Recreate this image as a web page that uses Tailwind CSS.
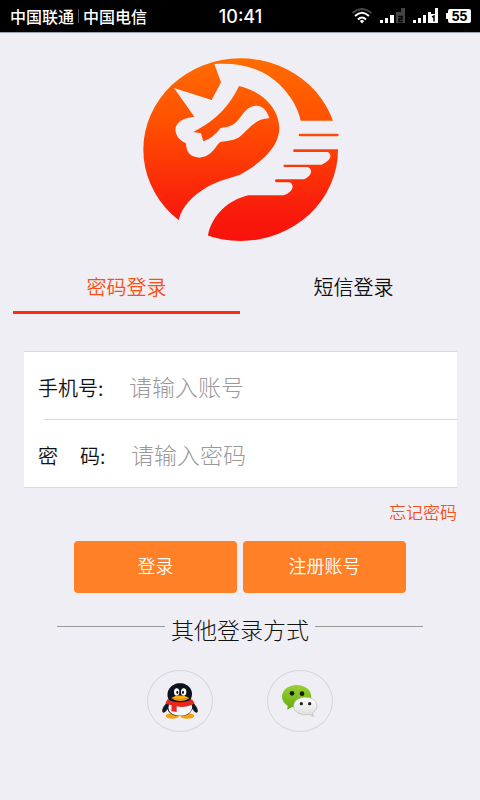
<!DOCTYPE html>
<html lang="zh-CN">
<head>
    <meta charset="UTF-8">
    <meta name="viewport" content="width=device-width, initial-scale=1.0">
    <title>登录</title>
    <script src="https://cdn.jsdelivr.net/npm/@tailwindcss/browser@4"></script>
</head>
<body class="min-h-screen bg-[#efeef4] font-['Noto_Sans_CJK_SC',sans-serif] font-[350] text-[#111]">
    <!-- Status bar -->
    <header class="grid h-[33px] grid-cols-[1fr_auto_1fr] items-center border-b border-gray-400 bg-black pr-[9px] pl-[10px] text-white">
        <div class="flex items-center text-base leading-6 font-medium">
            <span>中国联通</span>
            <span class="mx-1 h-[14px] w-px bg-gray-600"></span>
            <span>中国电信</span>
        </div>
        <time class="pt-px font-[Inter,sans-serif] text-lg leading-6 font-medium">10:41</time>
        <div class="flex items-center justify-end gap-2">
            <svg class="h-4 w-5" viewBox="0 0 20 16" fill="none" stroke-width="2">
                <path d="M0.500 5Q10 -3 19.500 5" stroke="#444"/>
                <path d="M3 8Q10 1.500 17 8M6 11.500Q10 7.500 14 11.500" stroke="#fff"/>
                <path d="M7.800 13Q10 11 12.200 13L10 15.500Z" fill="#fff"/>
            </svg>
            <svg class="h-4 w-[25px]" viewBox="0 0 25 16" fill="#fff">
                <path d="M0 12h3v3H0zM5 10h3v5H5zM10 7h4v8h-4z"/>
                <path d="M16 4h5V0h4v15h-9z" fill="#444"/>
                <path d="M18 8.500h4v2.500h-3v2.500h4" fill="none" stroke="#000" stroke-width="1.500"/>
            </svg>
            <svg class="h-4 w-[25px]" viewBox="0 0 25 16" fill="#fff">
                <path d="M0 12h3v3H0zM5 10h3v5H5zM10 7h3v8h-3zM15 4h3v11h-3zM22 0h3v15h-7V6h4z"/>
                <path d="M19 9l2-1v5.500" fill="none" stroke="#000" stroke-width="1.500"/>
            </svg>
            <div class="flex items-center">
                <span class="h-[6px] w-[2px] bg-white"></span>
                <span class="h-[14px] w-[23px] rounded-[2px] bg-white text-center font-['Liberation_Sans',sans-serif] text-sm leading-[15px] font-bold text-black">55</span>
            </div>
        </div>
    </header>

    <main>
        <!-- Logo -->
        <svg class="mx-auto mt-[17px] h-[200px] w-[210px]" viewBox="0 0 630 600" role="img" aria-label="Logo">
            <defs>
                <linearGradient id="logo-fill" x1="0" y1="0" x2="0" y2="1">
                    <stop offset="0" stop-color="#ff6c00"/>
                    <stop offset="0.35" stop-color="#ff5000"/>
                    <stop offset="0.85" stop-color="#f91a0d"/>
                    <stop offset="1" stop-color="#f8120c"/>
                </linearGradient>
            </defs>
            <ellipse cx="317" cy="299" rx="292" ry="274" fill="url(#logo-fill)"/>
            <path fill="#efeef4" d="M238 42C325 36 390 60 435 105C473 143 490 180 497 212H630V298H479C473 298 473 306 479 306H578C592 314 590 330 560 344H449C444 344 444 351 449 351H518C534 358 532 376 507 388H424C419 388 419 397 424 397H464C480 404 474 428 445 436H340C282 450 232 492 219 556V620H100L132 508C140 470 175 436 215 412C250 392 285 384 315 374C365 346 431 300 433 235C432 170 375 122 312 108C285 165 245 210 175 246L198 250L205 274C225 267 242 253 257 234C300 230 305 215 325 190C350 157 390 158 403 205C358 206 340 240 318 257C300 273 277 271 256 276C242 286 232 320 193 323C164 320 154 308 153 280C125 268 118 245 123 229C133 207 155 204 178 200L117 114L230 150L258 97Z"/>
            <path d="M495 255H607" stroke="#fc4b05" stroke-width="8" stroke-linecap="round"/>
        </svg>

        <!-- Tabs -->
        <div class="mx-[13px] mt-4 grid grid-cols-2" role="tablist">
            <button type="button" role="tab" aria-selected="true" class="h-12 border-b-3 border-[#fa2d0c] pb-1 text-xl text-[#fb4f14]">密码登录</button>
            <button type="button" role="tab" aria-selected="false" class="h-12 border-b-3 border-transparent pb-1 text-xl">短信登录</button>
        </div>

        <form class="mt-[37px]">
            <div class="mr-[23px] ml-6 border-y border-[#d9d9de] bg-white">
                <div class="flex h-[67px] items-center pl-[14px]">
                    <label for="phone" class="w-[91px] pt-1 text-xl">手机号:</label>
                    <input id="phone" type="text" placeholder="请输入账号" class="min-w-0 flex-1 text-[23px] leading-8 font-light outline-none placeholder:text-[#999]">
                </div>
                <div class="ml-5 border-t border-[#d9d9de]"></div>
                <div class="flex h-[67px] items-center pl-[14px]">
                    <label for="password" class="flex w-[93px] gap-[22px] pt-1 text-xl"><span>密</span><span>码:</span></label>
                    <input id="password" type="password" placeholder="请输入密码" class="min-w-0 flex-1 text-[23px] leading-8 font-light outline-none placeholder:text-[#999]">
                </div>
            </div>
            <div class="mt-3 mr-[23px] text-right text-[17px] leading-6">
                <a href="#" class="text-[#f4511e]">忘记密码</a>
            </div>
            <div class="mx-[74px] mt-[17px] grid grid-cols-2 gap-[6px]">
                <button type="submit" class="h-[52px] rounded bg-[#ff8026] pb-[5px] text-lg text-white">登录</button>
                <button type="button" class="h-[52px] rounded bg-[#ff8026] pb-[5px] text-lg text-white">注册账号</button>
            </div>
        </form>

        <!-- Other sign-in methods -->
        <div class="mx-[57px] mt-5 flex items-start gap-[6px]">
            <span class="mt-[13px] h-px flex-1 bg-[#999]"></span>
            <h2 class="text-[23px] leading-8 font-light">其他登录方式</h2>
            <span class="mt-[13px] h-px flex-1 bg-[#999]"></span>
        </div>
        <div class="mt-[25px] flex justify-center gap-[54px]">
            <a href="#" aria-label="QQ" class="flex h-[62px] w-[66px] items-center justify-center rounded-[50%] border border-[#d5d5da]">
                <svg class="h-9 w-9" viewBox="0 0 108 108">
                    <ellipse cx="31" cy="99" rx="20" ry="8" fill="#f5a211"/>
                    <ellipse cx="76" cy="99" rx="21" ry="8" fill="#f5a211"/>
                    <path d="M23 53C8 62-3 79 2 88C7 92 15 82 19 75M85 53C101 63 111 80 106 88C101 92 93 82 89 75" fill="#111820"/>
                    <path d="M20 50C9 25 27 1 54 1S99 25 86 50C99 76 89 99 54 99S8 76 20 50Z" fill="#0c1220"/>
                    <path d="M22 62H88C97 81 80 98 56 98C27 98 13 82 22 62Z" fill="#f4f7fa"/>
                    <ellipse cx="44" cy="27" rx="8" ry="11" fill="#fff"/>
                    <ellipse cx="65" cy="27" rx="8" ry="11" fill="#fff"/>
                    <ellipse cx="46" cy="28" rx="3" ry="5" fill="#111"/>
                    <ellipse cx="63" cy="28" rx="3" ry="5" fill="#111"/>
                    <path d="M16 49C39 61 69 61 90 49L98 61C81 72 58 74 44 70V87L28 85L29 67L10 62Z" fill="#e8281e"/>
                    <path d="M28 45C42 35 66 35 82 45C69 57 41 57 28 45Z" fill="#f9ae16"/>
                    <path d="M31 46Q55 54 78 46" fill="none" stroke="#c46d08" stroke-width="2"/>
                </svg>
            </a>
            <a href="#" aria-label="微信" class="flex h-[62px] w-[66px] items-center justify-center rounded-[50%] border border-[#d5d5da]">
                <svg class="h-8 w-9" viewBox="0 0 108 96">
                    <defs>
                        <linearGradient id="green" x1="0" y1="0" x2="0" y2="1">
                            <stop offset="0" stop-color="#9bcf39"/>
                            <stop offset="1" stop-color="#65ac0d"/>
                        </linearGradient>
                        <linearGradient id="silver" x1="0" y1="0" x2="0" y2="1">
                            <stop offset="0" stop-color="#fff"/>
                            <stop offset="1" stop-color="#dcdcdc"/>
                        </linearGradient>
                    </defs>
                    <path d="M44 0C19 0 0 15 0 35C0 47 7 56 17 62L16 74L30 66C62 74 88 58 88 35C88 15 69 0 44 0Z" fill="url(#green)"/>
                    <path d="M71 37C49 37 35 48 35 64C35 82 58 93 82 88L95 95L91 84C115 70 107 37 71 37Z" fill="url(#silver)" stroke="#b6b6b6" stroke-width="2"/>
                    <circle cx="30" cy="25" r="7" fill="#171b10"/>
                    <circle cx="60" cy="26" r="7" fill="#171b10"/>
                    <circle cx="58" cy="56" r="5" fill="#222"/>
                    <circle cx="83" cy="56" r="5" fill="#222"/>
                </svg>
            </a>
        </div>
    </main>
</body>
</html>
